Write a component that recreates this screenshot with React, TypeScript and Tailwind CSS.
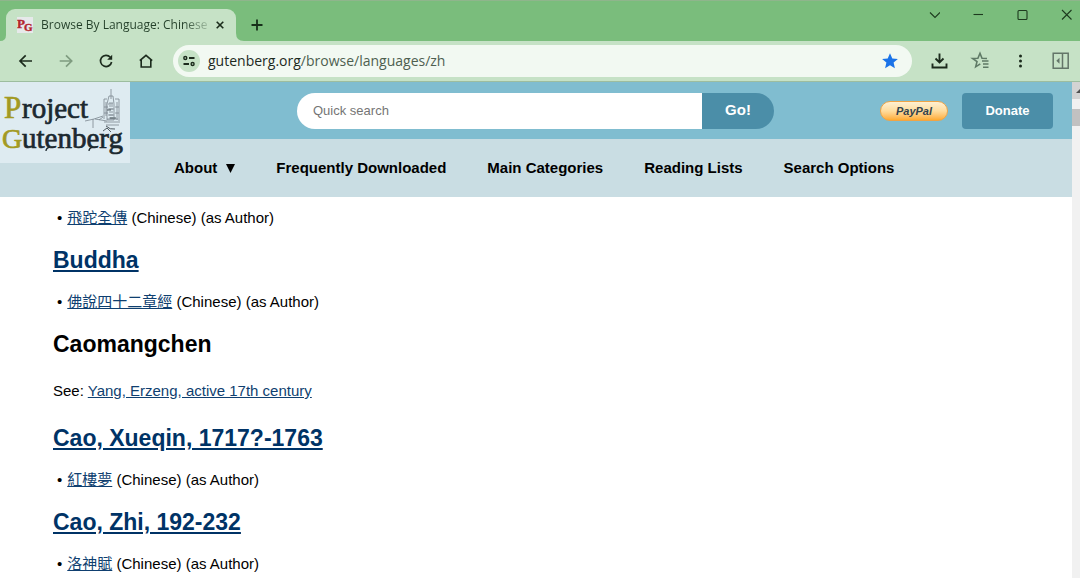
import type {ReactNode} from 'react'

type Entry = {
    name: string
    linked?: boolean
    see?: string
    book?: string
}

const entries: Entry[] = [
    {name: 'Buddha', linked: true, book: '佛說四十二章經'},
    {name: 'Caomangchen', see: 'Yang, Erzeng, active 17th century'},
    {name: 'Cao, Xueqin, 1717?-1763', linked: true, book: '紅樓夢'},
    {name: 'Cao, Zhi, 192-232', linked: true, book: '洛神賦'},
]

const navLinks = ['Frequently Downloaded', 'Main Categories', 'Reading Lists', 'Search Options']

function Icon({children, className = ''}: {children: ReactNode; className?: string}) {
    return (
        <svg
            width="20"
            height="20"
            viewBox="0 0 20 20"
            fill="none"
            stroke="currentColor"
            strokeWidth="1.7"
            className={className}
            aria-hidden="true">
            {children}
        </svg>
    )
}

function ToolButton({label, children, className = 'text-[#1c2b1d]'}: {
    label: string
    children: ReactNode
    className?: string
}) {
    return (
        <button aria-label={label} className={`flex h-8 w-10 shrink-0 items-center justify-center ${className}`}>
            <Icon>{children}</Icon>
        </button>
    )
}

function WindowButton({label, children}: {label: string; children: ReactNode}) {
    return (
        <button aria-label={label} className="flex h-7 w-7 items-center justify-center text-[#1d3a1e]">
            <svg width="12" height="12" viewBox="0 0 12 12" fill="none" stroke="currentColor" strokeWidth="1.1" aria-hidden="true">
                {children}
            </svg>
        </button>
    )
}

function Favicon() {
    return (
        <svg width="16" height="16" viewBox="0 0 16 16" className="shrink-0" aria-hidden="true">
            <rect width="16" height="16" fill="#e6e9ea"/>
            <g fill="#b3262e" stroke="#b3262e" strokeWidth="0.4" fontFamily="'Liberation Serif', serif" fontWeight="bold">
                <text x="0" y="11" fontSize="13">P</text>
                <text x="7" y="14" fontSize="11">G</text>
            </g>
        </svg>
    )
}

function TabStrip() {
    return (
        <div className="flex h-[41px] shrink-0 items-end border-t border-[#8fb58c] bg-[#7abd7c]">
            <div className="relative ml-[6px] flex h-8 w-[230px] items-center rounded-t-[9px] bg-[#c6e2c6] pr-2 pl-[11px]">
                {/* flared corners where the tab meets the toolbar */}
                <svg width="6" height="6" className="absolute bottom-0 -left-[6px]" aria-hidden="true">
                    <path d="M6 0v6H0q6 0 6-6z" fill="#c6e2c6"/>
                </svg>
                <svg width="8" height="8" className="absolute -right-2 bottom-0" aria-hidden="true">
                    <path d="M0 0v8h8Q0 8 0 0z" fill="#c6e2c6"/>
                </svg>
                <Favicon/>
                <span className="ml-2 bg-linear-to-r from-[#24402a] from-85% to-[#24402a]/20 bg-clip-text text-[12px] leading-5 whitespace-nowrap text-transparent">
                    Browse By Language: Chinese
                </span>
                <button aria-label="Close tab" className="ml-1 flex h-4 w-4 items-center justify-center text-[#1b2c1c]">
                    <svg width="8" height="8" viewBox="0 0 8 8" stroke="currentColor" strokeWidth="1.6" aria-hidden="true">
                        <path d="M.7.7l6.6 6.6M7.3.7L.7 7.3"/>
                    </svg>
                </button>
            </div>
            <button aria-label="New tab" className="ml-[11px] flex h-8 w-5 items-center justify-center text-[#17301a]">
                <svg width="12" height="12" viewBox="0 0 12 12" stroke="currentColor" strokeWidth="1.8" aria-hidden="true">
                    <path d="M6 .5v11M.5 6h11"/>
                </svg>
            </button>
            <div className="ml-auto flex gap-4 self-start">
                <WindowButton label="Search tabs"><path d="M2 3.5l5 5 5-5"/></WindowButton>
                <WindowButton label="Minimize"><path d="M1.5 5.5H11"/></WindowButton>
                <WindowButton label="Maximize"><rect x="2" y="1.5" width="9" height="9" rx="1"/></WindowButton>
                <WindowButton label="Close"><path d="M2 1l9.5 9.5M11.5 1L2 10.5"/></WindowButton>
            </div>
        </div>
    )
}

function Toolbar() {
    return (
        <div className="flex h-[41px] shrink-0 items-center border-b border-[#9dbd9f] bg-[#c6e2c6] pl-[6px]">
            <ToolButton label="Back"><path d="M16 10H4M9.7 4.3L4 10l5.7 5.7"/></ToolButton>
            <ToolButton label="Forward" className="text-[#7f9c80]"><path d="M3.7 10h11.9M10 4.3l5.7 5.7-5.7 5.7"/></ToolButton>
            <ToolButton label="Reload">
                <path d="M14.3 6.2A5.6 5.6 0 1 0 15.6 11"/>
                <path d="M16.2 3.8v5h-5z" fill="currentColor" stroke="none"/>
            </ToolButton>
            <ToolButton label="Home"><path d="M5.2 8.5V16h9.6V8.5L10 4.5zM3.8 9.7L10 4.3l6.2 5.4" strokeWidth="1.6"/></ToolButton>
            <div className="mr-2 ml-[7px] flex h-8 flex-1 items-center rounded-full bg-[#f2f9f2] pr-3 pl-[5px]">
                <button aria-label="Site information" className="flex h-[22px] w-[22px] items-center justify-center rounded-full bg-[#c6e2c6] text-[#1c2b1d]">
                    <Icon>
                        <circle cx="6.3" cy="7" r="1.5" strokeWidth="1.4"/>
                        <path d="M10 7h5.5M4.5 13H10" strokeWidth="1.9"/>
                        <circle cx="13.6" cy="13" r="1.5" strokeWidth="1.4"/>
                    </Icon>
                </button>
                <div className="ml-2 flex-1 text-[14px] leading-6 text-[#4e5f50]">
                    <span className="text-[#1d2a1e]">gutenberg.org</span>/browse/languages/zh
                </div>
                <button aria-label="Edit bookmark" className="text-[#1a73e8]">
                    <Icon>
                        <path d="M10 2.2l2.3 5.2 5.6.5-4.3 3.7 1.3 5.6-4.9-3-4.9 3 1.3-5.6-4.3-3.7 5.6-.5z" fill="currentColor" stroke="none"/>
                    </Icon>
                </button>
            </div>
            <ToolButton label="Downloads">
                <path d="M9.5 2.5v8.7M5.5 7.5l4 4 4-4M2.5 12.5v4h14v-4" strokeWidth="1.9"/>
            </ToolButton>
            <ToolButton label="Reading list" className="text-[#5f7a66]">
                <path d="M10.3 12.8l-4.6 3 1.3-5.1L2.5 7.5l5.4-.3L10 2.3l2 4.9 5 .3" strokeWidth="1.6"/>
                <path d="M12 9.9h6.5M13 13h5.5M13 16.2h5.5" strokeWidth="1.5"/>
            </ToolButton>
            <ToolButton label="Menu">
                <g fill="currentColor" stroke="none">
                    <circle cx="10.5" cy="5" r="1.5"/>
                    <circle cx="10.5" cy="10" r="1.5"/>
                    <circle cx="10.5" cy="15" r="1.5"/>
                </g>
            </ToolButton>
            <ToolButton label="Side panel" className="text-[#637568]">
                <path d="M3.2 2.2h15v15h-15zM12.5 2.2v15" strokeWidth="1.5"/>
                <path d="M9.5 6.8v6L6.3 9.8z" fill="currentColor" stroke="none"/>
            </ToolButton>
        </div>
    )
}

function Logo() {
    return (
        <a href="#" aria-label="Project Gutenberg" className="absolute top-0 left-0 bg-[#deebf1]">
            <svg width="130" height="81" viewBox="0 0 130 81" className="block" aria-hidden="true">
                {/* cathedral sketch */}
                <g fill="none" stroke="#7b878f" strokeWidth="0.8">
                    <path d="M111 7v10M109 14h4l1 8v16h-7V22zM104 17h3M115 17h4M104 17v20M119 17v22M106 20v14M117 20v18M104 25h4M115 25h4M104 31h4M115 31h4"/>
                    <path d="M85 39l9-2 9-3M95 37l12 2M104 40h16M106 43h13M108 22h5M108 27h6M108 33h6M107 37h11M103 35l-4 3M93 37v9"/>
                    <path d="M110 20v18M112 20v18" strokeDasharray="2 1"/>
                </g>
                <path d="M103 49l4-3 4 4M106 44q4 4 9 3M107 28h4M110 36h6" fill="none" stroke="#4f5a61" strokeWidth="1"/>
                <g fontFamily="'Liberation Serif', serif" fill="#1c2930" stroke="#1c2930" strokeWidth="0.7">
                    <text x="4" y="36" fontSize="31" fill="#a39a22" stroke="#a39a22">P</text>
                    <text x="22" y="36" fontSize="29">roject</text>
                    <text x="2" y="66" fontSize="28" fill="#a39a22" stroke="#a39a22">G</text>
                    <text x="22" y="66" fontSize="29">utenberg</text>
                </g>
                {/* tails under each e */}
                <path d="M60 35q-4 1-4 4M50 65q-4 1-4 4M93 65q-4 1-4 4" fill="none" stroke="#1c2930" strokeWidth="1.3"/>
            </svg>
        </a>
    )
}

function SiteHeader() {
    return (
        <header className="relative shrink-0">
            <div className="flex h-[57px] items-center bg-[#80bdd0] pr-[19px] pl-[297px]">
                <form className="flex h-9 flex-1" onSubmit={(e) => e.preventDefault()}>
                    <input
                        type="text"
                        aria-label="Quick search"
                        placeholder="Quick search"
                        className="min-w-0 flex-1 rounded-l-full bg-white px-4 text-[13px] text-black outline-none placeholder:text-[#757575]"
                    />
                    <button className="w-18 rounded-r-full bg-[#4b8ea8] text-[15px] font-bold text-white">Go!</button>
                </form>
                <button className="ml-[106px] h-5 w-[68px] rounded-full border border-[#f0a446] bg-linear-to-b from-[#fff0d2] via-[#ffdc9c] via-50% to-[#ffab2e] text-[11px] leading-4 font-bold text-[#33424d] italic">
                    PayPal
                </button>
                <button className="ml-[14px] h-9 w-[91px] rounded bg-[#4b8ea8] text-[13px] font-bold text-white">Donate</button>
            </div>
            <nav className="flex h-[58px] items-center gap-[41px] bg-[#c9dde3] pl-[174px] text-[15px] font-bold text-black">
                <button className="flex items-center gap-[9px]">
                    About
                    <svg width="9" height="9" viewBox="0 0 9 9" aria-hidden="true"><path d="M0 0h9L4.5 9z"/></svg>
                </button>
                {navLinks.map((label) => (
                    <a key={label} href="#">{label}</a>
                ))}
            </nav>
            <Logo/>
        </header>
    )
}

function BookItem({title}: {title: string}) {
    return (
        <ul>
            <li className="flex h-6 items-center gap-[5px] pl-1 leading-6 before:content-['•']">
                <span>
                    <a href="#" lang="zh-Hant" className="text-[#0f3f70] underline">{title}</a> (Chinese) (as Author)
                </span>
            </li>
        </ul>
    )
}

function AuthorEntry({entry}: {entry: Entry}) {
    return (
        <section>
            <h2 className="py-4 text-[23px] leading-7 font-bold">
                {entry.linked ? <a href="#" className="text-[#003366] underline">{entry.name}</a> : entry.name}
            </h2>
            {entry.book && <BookItem title={entry.book}/>}
            {entry.see && (
                <p className="py-[5px] leading-6">
                    See: <a href="#" className="text-[#0f3f70] underline">{entry.see}</a>
                </p>
            )}
        </section>
    )
}

function ScrollBar() {
    return (
        <div className="w-2 shrink-0 bg-[#f1f1f1]" aria-hidden="true">
            <div className="flex h-[17px] items-center justify-end bg-[#d3d3d3]">
                <svg width="4" height="4"><path d="M0 4l4-4v4z" fill="#505050"/></svg>
            </div>
            <div className="mt-[10px] h-[17px] bg-[#c1c1c1]"/>
        </div>
    )
}

export default function App() {
    return (
        <div className="flex h-screen flex-col overflow-hidden bg-white font-['Open_Sans','Noto_Sans',sans-serif]">
            <TabStrip/>
            <Toolbar/>
            <div className="flex min-h-0 flex-1 font-['Liberation_Sans','Noto_Sans_CJK_TC',sans-serif]">
                <div className="flex min-w-0 flex-1 flex-col">
                    <SiteHeader/>
                    <main className="min-h-0 flex-1 overflow-hidden px-[53px] pt-[9px] text-[15px] text-black">
                        <BookItem title="飛跎全傳"/>
                        {entries.map((entry) => (
                            <AuthorEntry key={entry.name} entry={entry}/>
                        ))}
                    </main>
                </div>
                <ScrollBar/>
            </div>
        </div>
    )
}
